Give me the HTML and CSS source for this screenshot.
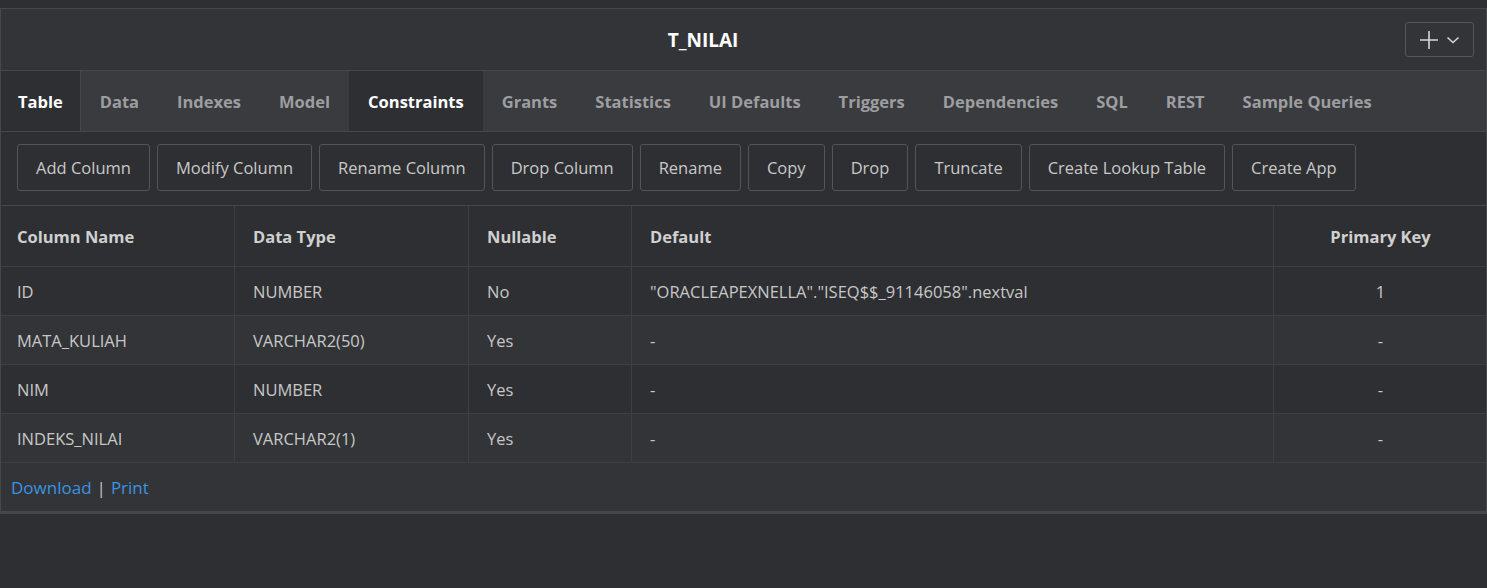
FILE: index.html
```html
<!DOCTYPE html>
<html>
<head>
<meta charset="utf-8">
<link rel="stylesheet" href="styles.css">
</head>
<body>
<div class="region">
  <div class="region-header">
    <h2 class="title">T_NILAI</h2>
    <button class="menu-btn" aria-label="Actions">
      <svg width="20" height="20" viewBox="0 0 20 20"><path d="M10 1v18M1 10h18" stroke="#d6d6d6" stroke-width="1.6" fill="none"/></svg>
      <svg width="14" height="10" viewBox="0 0 14 10"><path d="M1.5 2.5l5.5 5 5.5-5" stroke="#d6d6d6" stroke-width="1.6" fill="none"/></svg>
    </button>
  </div>
  <div class="tabs">
    <span class="tab active">Table</span>
    <span class="tab">Data</span>
    <span class="tab">Indexes</span>
    <span class="tab">Model</span>
    <span class="tab active">Constraints</span>
    <span class="tab">Grants</span>
    <span class="tab">Statistics</span>
    <span class="tab">UI Defaults</span>
    <span class="tab">Triggers</span>
    <span class="tab">Dependencies</span>
    <span class="tab">SQL</span>
    <span class="tab">REST</span>
    <span class="tab">Sample Queries</span>
  </div>
  <div class="toolbar">
    <button class="btn">Add Column</button>
    <button class="btn">Modify Column</button>
    <button class="btn">Rename Column</button>
    <button class="btn">Drop Column</button>
    <button class="btn">Rename</button>
    <button class="btn">Copy</button>
    <button class="btn">Drop</button>
    <button class="btn">Truncate</button>
    <button class="btn">Create Lookup Table</button>
    <button class="btn">Create App</button>
  </div>
  <table class="grid">
    <thead>
      <tr>
        <th class="c1">Column Name</th>
        <th class="c2">Data Type</th>
        <th class="c3">Nullable</th>
        <th class="c4">Default</th>
        <th class="c5 center">Primary Key</th>
      </tr>
    </thead>
    <tbody>
      <tr><td>ID</td><td>NUMBER</td><td>No</td><td>"ORACLEAPEXNELLA"."ISEQ$$_91146058".nextval</td><td class="center">1</td></tr>
      <tr class="alt"><td>MATA_KULIAH</td><td>VARCHAR2(50)</td><td>Yes</td><td>-</td><td class="center">-</td></tr>
      <tr><td>NIM</td><td>NUMBER</td><td>Yes</td><td>-</td><td class="center">-</td></tr>
      <tr class="alt"><td>INDEKS_NILAI</td><td>VARCHAR2(1)</td><td>Yes</td><td>-</td><td class="center">-</td></tr>
    </tbody>
  </table>
  <div class="footer">
    <a href="#" class="link">Download</a> <span class="sep">|</span> <a href="#" class="link">Print</a>
  </div>
</div>
</body>
</html>
```

FILE: styles.css
```css
html, body {
  margin: 0;
  padding: 0;
  background: #2e2f32;
  font-family: "Open Sans", "Noto Sans", sans-serif;
  color: #c9c9c9;
}
body {
  padding-top: 8px;
}
.region {
  border: 1px solid #46474a;
  border-bottom: 3px solid #46474a;
  background: #2e2f32;
}
.region-header {
  height: 61px;
  display: flex;
  align-items: center;
  background: #333437;
  border-bottom: 1px solid #46474a;
}
.title {
  flex: 1;
  margin: 0;
  text-align: center;
  font-size: 19px;
  font-weight: 700;
  color: #ffffff;
}
.menu-btn {
  margin-right: 12px;
  width: 69px;
  height: 35px;
  display: flex;
  align-items: center;
  justify-content: center;
  gap: 7px;
  padding: 0;
  background: #333437;
  border: 1px solid #55565a;
  border-radius: 3px;
}
.tabs {
  display: flex;
  height: 60px;
  background: #3a3b3e;
  border-bottom: 1px solid #46474a;
}
.tab {
  display: flex;
  align-items: center;
  padding: 0 19px;
  font-size: 16.5px;
  font-weight: 700;
  color: #9d9ea1;
}
.tab.active {
  background: #2e2f32;
  color: #ffffff;
}
.tabs .tab:first-child {
  padding: 0 17px 0 17px;
  border-right: 1px solid #46474a;
}
.toolbar {
  display: flex;
  gap: 7px;
  padding: 12px 16px 14px;
  border-bottom: 1px solid #46474a;
}
.btn {
  height: 47px;
  padding: 0 18px;
  background: #2e2f32;
  border: 1px solid #535458;
  border-radius: 3px;
  color: #c9c9c9;
  font-family: inherit;
  font-size: 16.5px;
}
.grid {
  width: 100%;
  border-collapse: collapse;
}
.grid th, .grid td {
  text-align: left;
  padding: 0 17px 0 18px;
  border-bottom: 1px solid #3e3f42;
  border-left: 1px solid #3e3f42;
  font-size: 16.5px;
}
.grid th:first-child, .grid td:first-child {
  border-left: none;
  padding-left: 16px;
}
.grid th {
  height: 60px;
  font-weight: 700;
  color: #d0d0d0;
}
.grid td {
  height: 48px;
  color: #c8c8c8;
}
.grid tr.alt td {
  background: #333437;
}
.c1 { width: 200px; }
.c2 { width: 198px; }
.c3 { width: 127px; }
.c5 { width: 177px; }
.grid .center {
  text-align: center;
}
.footer {
  height: 48px;
  display: flex;
  align-items: center;
  gap: 5px;
  padding-left: 10px;
  background: #333437;
  font-size: 17px;
}
.link {
  color: #3a93e0;
  text-decoration: none;
}
.sep {
  color: #c9c9c9;
}
```
